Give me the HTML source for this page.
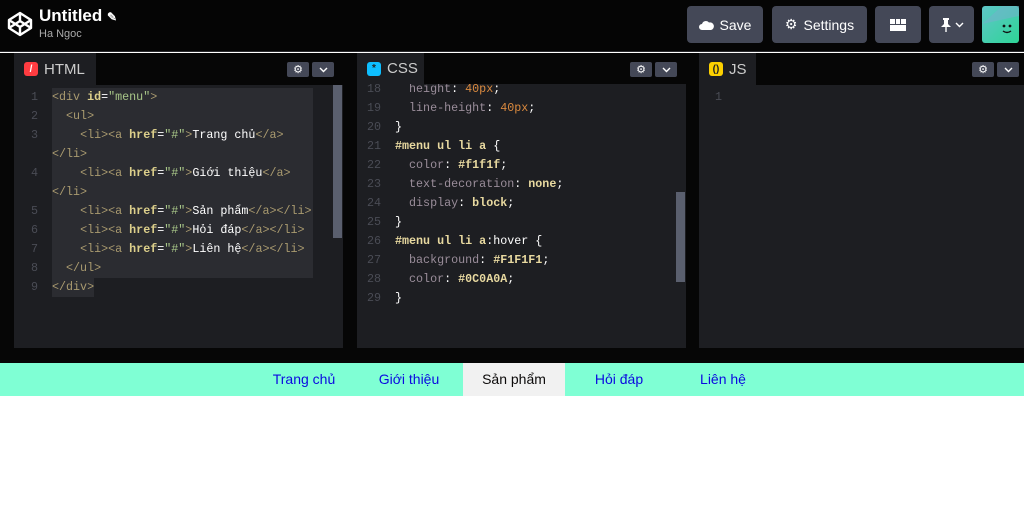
<!DOCTYPE html>
<html><head><meta charset="utf-8"><style>
*{margin:0;padding:0;box-sizing:border-box}
body{width:1024px;height:518px;background:#fff;font-family:"Liberation Sans",sans-serif;position:relative;overflow:hidden}
.top{position:absolute;left:0;top:0;width:1024px;height:52px;background:#050505;border-bottom:1px solid #2a2a2e}
.btn{position:absolute;top:6px;height:37px;background:#444857;border-radius:4px;color:#fff;font-size:14px;display:flex;align-items:center;justify-content:center;gap:6px}
.work{position:absolute;left:0;top:53px;width:1024px;height:310px;background:#060606}
.panel{position:absolute;top:53px;height:295px;background:#1d1e22}
.tabbar{position:absolute;left:0;top:0;right:0;height:32px;background:#060606}
.tab{position:absolute;left:0;top:0;height:32px;background:#1d1e22;color:#ccc;font-size:15px;display:flex;align-items:center;padding-left:10px;gap:6px}
.ic{width:14px;height:14px;border-radius:3px;display:inline-flex;align-items:center;justify-content:center;font-size:10px;color:#222;font-weight:bold}
.sb{position:absolute;height:15px;background:#444857;border-radius:2px;top:9px;display:flex;align-items:center;justify-content:center}
.code{position:absolute;font-family:"Liberation Mono",monospace;font-size:11.7px;line-height:19px;white-space:pre;color:#fff}
.ln{position:absolute;font-family:"Liberation Mono",monospace;font-size:11.7px;line-height:19px;color:#4a4c55;white-space:pre;text-align:right}
.t{color:#a99a6f}.a{color:#dccf8b;font-weight:bold}.v{color:#a8c688}.p{color:#9a8d9a}.n{color:#d9893f}.k{color:#e8d9a0;font-weight:bold}
.menu{position:absolute;left:0;top:363px;width:1024px;height:33px;background:#7fffd4}
.mi{position:absolute;top:0;height:33px;width:102px;text-align:center;line-height:33px;font-size:14px;color:#0c0ae0}
</style></head><body>
<div class="top">
 <svg style="position:absolute;left:7px;top:11px" width="26" height="26" viewBox="0 0 26 26" fill="none" stroke="#fff" stroke-width="2.4" stroke-linejoin="round"><path d="M13 2 L24 9 L24 17 L13 24 L2 17 L2 9 Z M2 9 L13 16 L24 9 M2 17 L13 10 L24 17 M13 2 L13 10 M13 16 L13 24"/></svg>
 <div style="position:absolute;left:39px;top:6px;color:#fff;font-size:17px;font-weight:bold">Untitled <span style="font-size:12px">✎</span></div>
 <div style="position:absolute;left:39px;top:28px;color:#aaa;font-size:11px">Ha Ngoc</div>
 <div class="btn" style="left:687px;width:76px"><svg width="15" height="10" viewBox="0 0 15 10"><path d="M3 10 A3 3 0 0 1 3 4 A4 4 0 0 1 10 2.5 A3.5 3.5 0 0 1 12 10 Z" fill="#fff"/></svg>Save</div>
 <div class="btn" style="left:772px;width:95px"><span>⚙</span>Settings</div>
 <div class="btn" style="left:875px;width:46px"><svg width="16" height="12"><rect x="0" y="0" width="16" height="12" fill="#fff"/><rect x="5" y="0" width="1" height="5" fill="#444857"/><rect x="10" y="0" width="1" height="5" fill="#444857"/><rect x="0" y="5" width="16" height="1" fill="#444857"/></svg></div>
 <div class="btn" style="left:929px;width:45px;gap:3px"><svg width="12" height="16" viewBox="0 0 12 16"><path d="M3 1 H9 V3 H8 V7 L11 10 H1 L4 7 V3 H3 Z" fill="#fff"/><rect x="5.3" y="10" width="1.4" height="5" fill="#fff"/></svg><svg width="9" height="6" viewBox="0 0 9 6"><path d="M1 1 L4.5 4.5 L8 1" stroke="#fff" stroke-width="1.4" fill="none"/></svg></div>
 <svg style="position:absolute;left:982px;top:6px" width="37" height="37"><defs><linearGradient id="g" x1="0" y1="0" x2="1" y2="1"><stop offset="0" stop-color="#5fc6c8"/><stop offset="1" stop-color="#2ed596"/></linearGradient></defs><rect width="37" height="37" rx="3" fill="url(#g)"/><path d="M0 18 L20 0 L37 0 L37 10 Z" fill="#6fb4c9" opacity=".6"/><circle cx="22" cy="20" r="1.4" fill="#111"/><circle cx="28" cy="20" r="1.4" fill="#111"/><path d="M21 25 Q25 28 29 25" stroke="#111" stroke-width="1.4" fill="none"/></svg>
</div>
<div class="work"></div>

<div class="panel" style="left:14px;width:329px">
 <div class="tabbar"></div>
 <div class="tab" style="width:82px"><span class="ic" style="background:#ff3c41;color:#fff">/</span>HTML</div>
 <div class="sb" style="left:273px;width:22px;color:#fff;font-size:11px">⚙</div><div class="sb" style="left:298px;width:22px"><svg width="9" height="6" viewBox="0 0 9 6"><path d="M1 1 L4.5 4.5 L8 1" stroke="#fff" stroke-width="1.4" fill="none"/></svg></div>
 <div style="position:absolute;left:38px;top:35px;width:261px;height:190px;background:#2b2c31"></div>
 <div style="position:absolute;left:38px;top:225px;width:42px;height:19px;background:#2b2c31"></div>
 <div style="position:absolute;left:319px;top:32px;width:9px;height:153px;background:#5a5f6e"></div>
 <div class="ln" style="left:8px;top:35px;width:16px">1
2
3

4

5
6
7
8
9</div>
 <div class="code" style="left:38px;top:35px"><span class="t">&lt;div</span> <span class="a">id</span>=<span class="v">"menu"</span><span class="t">&gt;</span>
  <span class="t">&lt;ul&gt;</span>
    <span class="t">&lt;li&gt;&lt;a</span> <span class="a">href</span>=<span class="v">"#"</span><span class="t">&gt;</span>Trang chủ<span class="t">&lt;/a&gt;</span>
<span class="t">&lt;/li&gt;</span>
    <span class="t">&lt;li&gt;&lt;a</span> <span class="a">href</span>=<span class="v">"#"</span><span class="t">&gt;</span>Giới thiệu<span class="t">&lt;/a&gt;</span>
<span class="t">&lt;/li&gt;</span>
    <span class="t">&lt;li&gt;&lt;a</span> <span class="a">href</span>=<span class="v">"#"</span><span class="t">&gt;</span>Sản phẩm<span class="t">&lt;/a&gt;&lt;/li&gt;</span>
    <span class="t">&lt;li&gt;&lt;a</span> <span class="a">href</span>=<span class="v">"#"</span><span class="t">&gt;</span>Hỏi đáp<span class="t">&lt;/a&gt;&lt;/li&gt;</span>
    <span class="t">&lt;li&gt;&lt;a</span> <span class="a">href</span>=<span class="v">"#"</span><span class="t">&gt;</span>Liên hệ<span class="t">&lt;/a&gt;&lt;/li&gt;</span>
  <span class="t">&lt;/ul&gt;</span>
<span class="t">&lt;/div&gt;</span></div>
</div>

<div class="panel" style="left:357px;width:329px;overflow:hidden">
 <div class="ln" style="left:4px;top:27px;width:20px">18
19
20
21
22
23
24
25
26
27
28
29</div>
 <div class="code" style="left:38px;top:27px">  <span class="p">height</span>: <span class="n">40px</span>;
  <span class="p">line-height</span>: <span class="n">40px</span>;
}
<span class="k">#menu ul li a</span> {
  <span class="p">color</span>: <span class="k">#f1f1f</span>;
  <span class="p">text-decoration</span>: <span class="k">none</span>;
  <span class="p">display</span>: <span class="k">block</span>;
}
<span class="k">#menu ul li a</span>:hover {
  <span class="p">background</span>: <span class="k">#F1F1F1</span>;
  <span class="p">color</span>: <span class="k">#0C0A0A</span>;
}</div>
 <div class="tabbar" style="height:31px"></div>
 <div class="tab" style="width:67px;height:31px"><span class="ic" style="background:#0ebeff">*</span>CSS</div>
 <div class="sb" style="left:273px;width:22px;color:#fff;font-size:11px">⚙</div><div class="sb" style="left:298px;width:22px"><svg width="9" height="6" viewBox="0 0 9 6"><path d="M1 1 L4.5 4.5 L8 1" stroke="#fff" stroke-width="1.4" fill="none"/></svg></div>
 <div style="position:absolute;left:319px;top:139px;width:9px;height:90px;background:#5a5f6e"></div>
</div>

<div class="panel" style="left:699px;width:325px">
 <div class="tabbar"></div>
 <div class="tab" style="width:57px"><span class="ic" style="background:#fcd000">()</span>JS</div>
 <div class="sb" style="left:273px;width:22px;color:#fff;font-size:11px">⚙</div><div class="sb" style="left:298px;width:22px"><svg width="9" height="6" viewBox="0 0 9 6"><path d="M1 1 L4.5 4.5 L8 1" stroke="#fff" stroke-width="1.4" fill="none"/></svg></div>
 <div class="ln" style="left:8px;top:35px;width:15px">1</div>
</div>

<div class="menu">
 <div class="mi" style="left:253px">Trang chủ</div>
 <div class="mi" style="left:358px">Giới thiệu</div>
 <div class="mi" style="left:463px;background:#f1f1f1;color:#0c0a0a">Sản phẩm</div>
 <div class="mi" style="left:568px">Hỏi đáp</div>
 <div class="mi" style="left:672px">Liên hệ</div>
</div>
</body></html>
